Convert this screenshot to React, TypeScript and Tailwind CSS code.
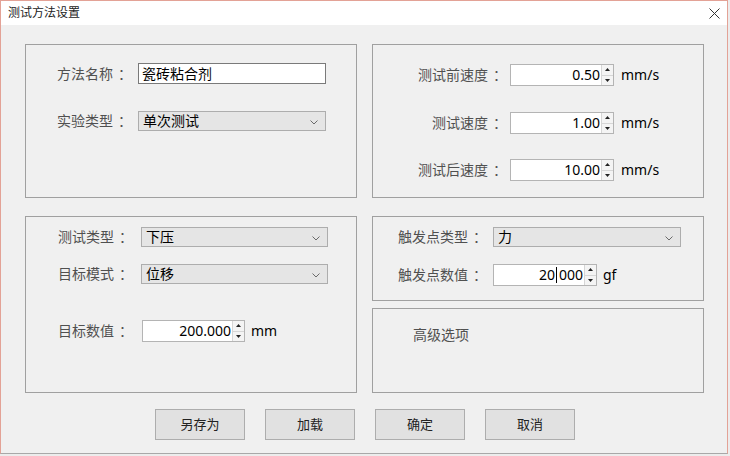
import React from "react";

const FONT = "font-['Noto_Sans','Noto_Sans_CJK_SC',sans-serif]";

function Label({ w, text, right }: { w: string; text: string; right?: boolean }) {
  const body = text.replace("：", "");
  return (
    <div className={`${w} shrink-0 text-[14px] leading-[20px] text-[#505050] ${right ? "text-right" : ""}`}>
      {body}
      <span className="relative left-[5px]">：</span>
    </div>
  );
}

function Chevron() {
  return (
    <svg width="8" height="5" viewBox="0 0 8 5" className="absolute right-[7px] top-[8px]">
      <path d="M0.5 0.5 L4 4 L7.5 0.5" fill="none" stroke="#6a6a6a" strokeWidth="1" />
    </svg>
  );
}

function Select({ w, value }: { w: string; value: string }) {
  return (
    <div className={`${w} relative h-[20px] shrink-0 bg-[#e5e5e5] border border-[#adadad] flex items-center pl-[4px] text-[14px] leading-[18px] text-black`}>
      {value}
      <Chevron />
    </div>
  );
}

function SpinButtons() {
  return (
    <div className="w-[12px] shrink-0 flex flex-col border-l border-[#d6d6d6] bg-[#f4f4f4]">
      <div className="flex-1 flex items-center justify-center border-b border-[#d6d6d6]">
        <svg width="5" height="3" viewBox="0 0 5 3"><path d="M0 3 L2.5 0 L5 3 Z" fill="#222" /></svg>
      </div>
      <div className="flex-1 flex items-center justify-center">
        <svg width="5" height="3" viewBox="0 0 5 3"><path d="M0 0 L2.5 3 L5 0 Z" fill="#222" /></svg>
      </div>
    </div>
  );
}

function Spin({ w, children }: { w: string; children: React.ReactNode }) {
  return (
    <div className={`${w} h-[22px] shrink-0 flex bg-white border border-[#b4b4b4]`}>
      <div className="flex-1 flex items-center justify-end pr-[1px] text-[14px] leading-[18px] text-black">{children}</div>
      <SpinButtons />
    </div>
  );
}

function Unit({ text }: { text: string }) {
  return <div className="ml-[7px] text-[14px] leading-[20px] text-black">{text}</div>;
}

function Button({ text }: { text: string }) {
  return (
    <div className="w-[90px] h-[31px] bg-[#e1e1e1] border border-[#adadad] flex items-center justify-center text-[13px] text-[#222]">
      {text}
    </div>
  );
}

export default function App() {
  return (
    <div className={`w-[730px] h-[456px] bg-[#ececec] overflow-hidden ${FONT}`}>
      <div className="w-[728px] h-[454px] flex flex-col border-l border-t border-r border-[#e3a296] border-b border-b-[#a8a8a8]">
        {/* Title bar */}
        <div className="h-[24px] shrink-0 bg-white flex items-center justify-between pl-[7px] pr-[7px]">
          <div className="text-[12px] text-[#222] leading-[16px]">测试方法设置</div>
          <svg width="11" height="11" viewBox="0 0 11 11">
            <path d="M0.5 0.5 L10.5 10.5 M10.5 0.5 L0.5 10.5" stroke="#333" strokeWidth="1" />
          </svg>
        </div>
        {/* Body */}
        <div className="flex-1 bg-[#f0f0f0] pl-[24px] pt-[19px] flex flex-col">
          <div className="flex gap-[15px]">
            <div className="w-[332px] h-[154px] border border-[#a0a0a0] pl-[31px] flex flex-col">
              <div className="mt-[18px] h-[21px] flex items-center">
                <Label w="w-[81px]" text="方法名称：" />
                <div className="w-[188px] h-[21px] bg-white border border-[#7a7a7a] flex items-center pl-[3px] text-[14px] leading-[18px] text-black">瓷砖粘合剂</div>
              </div>
              <div className="mt-[27px] h-[20px] flex items-center">
                <Label w="w-[81px]" text="实验类型：" />
                <Select w="w-[188px]" value="单次测试" />
              </div>
            </div>
            <div className="w-[332px] h-[154px] border border-[#a0a0a0] flex flex-col">
              <div className="mt-[19px] h-[22px] flex items-center">
                <Label w="w-[129px]" right text="测试前速度：" />
                <div className="w-[8px]" />
                <Spin w="w-[104px]">0.50</Spin>
                <Unit text="mm/s" />
              </div>
              <div className="mt-[26px] h-[22px] flex items-center">
                <Label w="w-[129px]" right text="测试速度：" />
                <div className="w-[8px]" />
                <Spin w="w-[104px]">1.00</Spin>
                <Unit text="mm/s" />
              </div>
              <div className="mt-[25px] h-[22px] flex items-center">
                <Label w="w-[129px]" right text="测试后速度：" />
                <div className="w-[8px]" />
                <Spin w="w-[104px]">10.00</Spin>
                <Unit text="mm/s" />
              </div>
            </div>
          </div>
          <div className="mt-[18px] flex gap-[15px]">
            <div className="w-[332px] h-[177px] border border-[#a0a0a0] pl-[32px] flex flex-col">
              <div className="mt-[10px] h-[20px] flex items-center">
                <Label w="w-[83px]" text="测试类型：" />
                <Select w="w-[187px]" value="下压" />
              </div>
              <div className="mt-[17px] h-[20px] flex items-center">
                <Label w="w-[83px]" text="目标模式：" />
                <Select w="w-[187px]" value="位移" />
              </div>
              <div className="mt-[36px] h-[22px] flex items-center">
                <Label w="w-[84px]" text="目标数值：" />
                <Spin w="w-[103px]">200.000</Spin>
                <div className="ml-[6px] text-[14px] leading-[20px] text-black">mm</div>
              </div>
            </div>
            <div className="w-[332px] flex flex-col gap-[7px]">
              <div className="h-[85px] border border-[#a0a0a0] pl-[25px] flex flex-col">
                <div className="mt-[10px] h-[20px] flex items-center">
                  <Label w="w-[95px]" text="触发点类型：" />
                  <Select w="w-[188px]" value="力" />
                </div>
                <div className="mt-[17px] h-[22px] flex items-center">
                  <Label w="w-[95px]" text="触发点数值：" />
                  <Spin w="w-[104px]">
                    <span>20</span>
                    <span className="relative inline-block w-[4px] h-[16px]">
                      <span className="absolute left-[1px] top-0 w-px h-[16px] bg-black" />
                    </span>
                    <span>000</span>
                  </Spin>
                  <div className="ml-[6px] text-[14px] leading-[20px] text-black">gf</div>
                </div>
              </div>
              <div className="h-[85px] border border-[#a0a0a0] pl-[40px] pt-[17px]">
                <div className="text-[14px] leading-[18px] text-[#505050]">高级选项</div>
              </div>
            </div>
          </div>
          <div className="mt-[16px] ml-[130px] flex gap-[20px]">
            <Button text="另存为" />
            <Button text="加载" />
            <Button text="确定" />
            <Button text="取消" />
          </div>
        </div>
      </div>
    </div>
  );
}
